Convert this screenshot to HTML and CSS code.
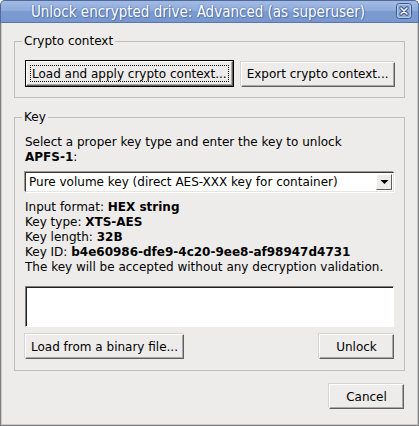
FILE: index.html
```html
<!DOCTYPE html>
<html>
  <head>
    <title>Unlock encrypted drive: Advanced (as superuser)</title>
    <link rel="stylesheet" href="styles.css">
  </head>
  <body>
    <div class="fenster">
      <div class="titelleiste">
        <span class="titel">Unlock encrypted drive: Advanced (as superuser)</span>
        <span class="schliessen">
          <svg width="16" height="16" viewBox="0 0 16 16">
            <rect x="0.5" y="0.5" width="15" height="15" rx="3" fill="#8eabd9" stroke="#3e5987"/>
            <rect x="1.5" y="1.5" width="13" height="13" rx="2" fill="none" stroke="#b4c8ea"/>
            <path d="M5 5 L11 11 M11 5 L5 11" stroke="#35507e" stroke-width="3.2" stroke-linecap="round"/>
            <path d="M5 5 L11 11 M11 5 L5 11" stroke="#ffffff" stroke-width="1.5" stroke-linecap="round"/>
          </svg>
        </span>
      </div>
      <div class="inhalt">
        <fieldset class="gruppe krypto">
          <legend>Crypto context</legend>
          <div class="knopfreihe">
            <span class="standard-rahmen"><button class="knopf fokus">Load and apply crypto context...</button></span>
            <button class="knopf">Export crypto context...</button>
          </div>
        </fieldset>

        <fieldset class="gruppe schluessel">
          <legend>Key</legend>
          <p class="hinweis">Select a proper key type and enter the key to unlock<br><b>APFS-1</b>:</p>
          <div class="auswahl">
            <span class="auswahl-text">Pure volume key (direct AES-XXX key for container)</span>
            <span class="pfeil">
              <svg width="9" height="6" viewBox="0 0 9 6"><path d="M0.5 1 L8.5 1 L4.5 5 Z" fill="#000"/></svg>
            </span>
          </div>
          <div class="infos">
            <div>Input format: <b>HEX string</b></div>
            <div>Key type: <b>XTS-AES</b></div>
            <div>Key length: <b>32B</b></div>
            <div>Key ID: <b>b4e60986-dfe9-4c20-9ee8-af98947d4731</b></div>
            <div>The key will be accepted without any decryption validation.</div>
          </div>
          <textarea class="eingabe"></textarea>
          <div class="knopfreihe verteilt">
            <button class="knopf">Load from a binary file...</button>
            <button class="knopf">Unlock</button>
          </div>
        </fieldset>

        <div class="fuss">
          <button class="knopf">Cancel</button>
        </div>
      </div>
    </div>
  </body>
</html>
```

FILE: styles.css
```css
body {
  margin: 0;
  background: #ffffff;
  font-family: "DejaVu Sans", sans-serif;
  font-size: 12px;
  color: #000;
}

.fenster {
  width: 419px;
  height: 426px;
  display: flex;
  flex-direction: column;
}

.titelleiste {
  height: 23px;
  box-sizing: border-box;
  display: flex;
  align-items: center;
  background: linear-gradient(#a3bbe4, #8fabdc 45%, #7c9bd1 50%, #7897ce);
  border: 1px solid #4f6a99;
  border-bottom: 1px solid #5a76a6;
  border-radius: 5px 5px 0 0;
}

.titel {
  flex: 1;
  text-align: center;
  font-family: "DejaVu Sans Condensed", "DejaVu Sans", sans-serif;
  font-stretch: condensed;
  font-size: 15px;
  color: #ffffff;
  text-shadow: 0 0 2px #4a68a0, 1px 1px 0 #5a78ad;
  white-space: nowrap;
}

.schliessen {
  display: flex;
  width: 16px;
  height: 16px;
  margin: 0 6px 1px 1px;
}

.inhalt {
  flex: 1;
  display: flex;
  flex-direction: column;
  background: #edeceb;
  border: 1px solid #7e7e7e;
  border-top: none;
  box-shadow: inset 1px 0 0 #c9c9c9, inset -1px -1px 0 #c9c9c9;
  padding: 0 13px 0 13px;
}

.gruppe {
  margin: 0;
  min-width: 0;
  border: 1px solid #bebebe;
  padding: 0 10px;
}

.gruppe legend {
  margin-left: -3px;
  padding: 0 2px;
  line-height: 15px;
  font-size: 12px;
}

.krypto {
  margin-top: 11px;
  padding-top: 11px;
  padding-bottom: 10px;
}

.schluessel {
  margin-top: 12px;
  padding-top: 10px;
  padding-bottom: 11px;
}

.knopfreihe {
  display: flex;
  align-items: center;
}

.verteilt {
  justify-content: space-between;
  margin-top: 7px;
}

.knopf {
  flex: none;
  height: 25px;
  min-width: 75px;
  box-sizing: border-box;
  padding: 0 5px;
  white-space: nowrap;
  font-family: "DejaVu Sans", sans-serif;
  font-size: 12px;
  color: #000;
  background: #edeceb;
  border: 1px solid;
  border-color: #ffffff #5f5f5f #5f5f5f #ffffff;
  box-shadow: inset -1px -1px 0 #a9a9a9, -1px -1px 0 #d4d4d4;
  border-radius: 0;
}

.standard-rahmen {
  flex: none;
  display: flex;
  border: 1px solid #000;
  margin-right: 7px;
}

.standard-rahmen .knopf {
  box-shadow: inset -1px -1px 0 #a9a9a9;
}

.fokus {
  outline: 1px dotted #000;
  outline-offset: -5px;
}

.knopfreihe > .knopf {
  margin-top: 1px;
}

.verteilt > .knopf {
  margin-top: 0;
}

.hinweis {
  margin: 0;
  line-height: 15px;
}

.auswahl {
  margin-top: 7px;
  height: 20px;
  box-sizing: border-box;
  display: flex;
  align-items: center;
  background: #ffffff;
  border: 1px solid;
  border-color: #3a3a3a #e4e4e4 #e4e4e4 #3a3a3a;
  box-shadow: -1px -1px 0 #9a9a9a, 1px 1px 0 #ffffff;
  padding-left: 3px;
  padding-right: 1px;
}

.auswahl-text {
  flex: 1;
  white-space: nowrap;
}

.pfeil {
  width: 16px;
  height: 16px;
  box-sizing: border-box;
  display: flex;
  align-items: center;
  justify-content: center;
  background: #edeceb;
  border: 1px solid;
  border-color: #ffffff #5f5f5f #5f5f5f #ffffff;
}

.infos {
  margin-top: 8px;
  line-height: 15px;
}

.eingabe {
  display: block;
  width: 100%;
  margin: 11px 0 0 0;
  height: 41px;
  box-sizing: border-box;
  resize: none;
  background: #ffffff;
  border: 1px solid;
  border-color: #7e7e7e #ffffff #ffffff #7e7e7e;
  box-shadow: inset 1px 1px 0 #1e1e1e;
}

.fuss {
  display: flex;
  justify-content: flex-end;
  margin-top: 13px;
  padding-right: 1px;
}
```
